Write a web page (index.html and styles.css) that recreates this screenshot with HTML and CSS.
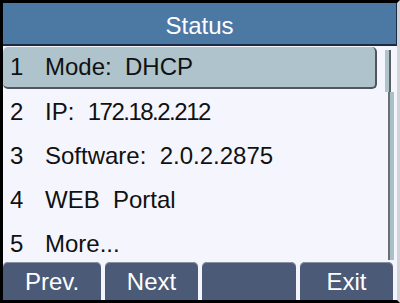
FILE: index.html
```html
<!DOCTYPE html>
<html lang="en">
<head>
    <meta charset="UTF-8">
    <meta name="viewport" content="width=device-width, initial-scale=1.0">
    <title>Status</title>
    <link rel="stylesheet" href="styles.css">
</head>
<body>
    <div class="screen">
        <div class="title">Status</div>
        <div class="content">
            <ul class="menu">
                <li class="item selected"><span class="num">1</span><span class="label">Mode:  DHCP</span></li>
                <li class="item"><span class="num">2</span><span class="label">IP:  <span class="ip">172.18.2.212</span></span></li>
                <li class="item"><span class="num">3</span><span class="label">Software:  2.0.2.2875</span></li>
                <li class="item"><span class="num">4</span><span class="label">WEB  Portal</span></li>
                <li class="item"><span class="num">5</span><span class="label">More...</span></li>
            </ul>
            <div class="scrollbar">
                <div class="thumb"></div>
                <div class="track"></div>
            </div>
        </div>
        <div class="softkeys">
            <div class="softkey">Prev.</div>
            <div class="softkey">Next</div>
            <div class="softkey"></div>
            <div class="softkey">Exit</div>
        </div>
    </div>
</body>
</html>
```

FILE: styles.css
```css
body {
    margin: 0;
    padding: 0;
    background-color: #f5f6fd;
    font-family: "Liberation Sans", Arial, sans-serif;
}
.screen {
    width: 400px;
    height: 303px;
    box-sizing: border-box;
    border-top: 3px solid #000;
    border-left: 3px solid #000;
    border-bottom: 3px solid #000;
    border-right: 3px solid #d2d3d8;
    background-color: #f5f6fd;
    display: flex;
    flex-direction: column;
    overflow: hidden;
}
.title {
    height: 36px;
    padding-top: 5px;
    line-height: 36px;
    border-bottom: 2px solid #1d2a42;
    border-right: 1px solid #1d2a42;
    background-color: #4b79a4;
    color: #fff;
    font-size: 24px;
    text-align: center;
}
.content {
    height: 216px;
    display: flex;
    overflow: hidden;
}
.menu {
    list-style: none;
    margin: 0;
    padding: 1px 0 0 0;
    width: 374px;
}
.item {
    height: 42px;
    margin-bottom: 2px;
    line-height: 42px;
    font-size: 24px;
    color: #111;
    display: flex;
    box-sizing: border-box;
}
.item .num {
    width: 42px;
    padding-left: 7px;
    box-sizing: border-box;
}
.item .label {
    white-space: pre;
}
/* the phone font has a narrow "1" */
.item .ip {
    letter-spacing: -1.5px;
}
.selected {
    background-color: #aec3cb;
    border-right: 2px solid #50565b;
    border-bottom: 2px solid #50565b;
    border-radius: 5px;
    line-height: 40px;
}
.scrollbar {
    margin: 4px 0 0 8px;
    width: 9px;
    height: 210px;
    display: flex;
    flex-direction: column;
}
.thumb {
    width: 4px;
    height: 42px;
    background-color: #aec3cb;
    border-right: 2px solid #5a5f63;
}
.track {
    flex: 1;
    margin-left: 3px;
    width: 4px;
    background-color: #a9c0c8;
    border-left: 2px solid #6a6f73;
}
.softkeys {
    display: grid;
    grid-template-columns: 98px 93px 94px 93px;
    column-gap: 4px;
    height: 38px;
}
.softkey {
    background-color: #4b5a77;
    border-radius: 5px 5px 0 0;
    box-shadow: inset 0 1px 0 #8a93a6;
    color: #fff;
    font-size: 24px;
    text-align: center;
    height: 36px;
    padding-top: 2px;
    line-height: 36px;
}
```
